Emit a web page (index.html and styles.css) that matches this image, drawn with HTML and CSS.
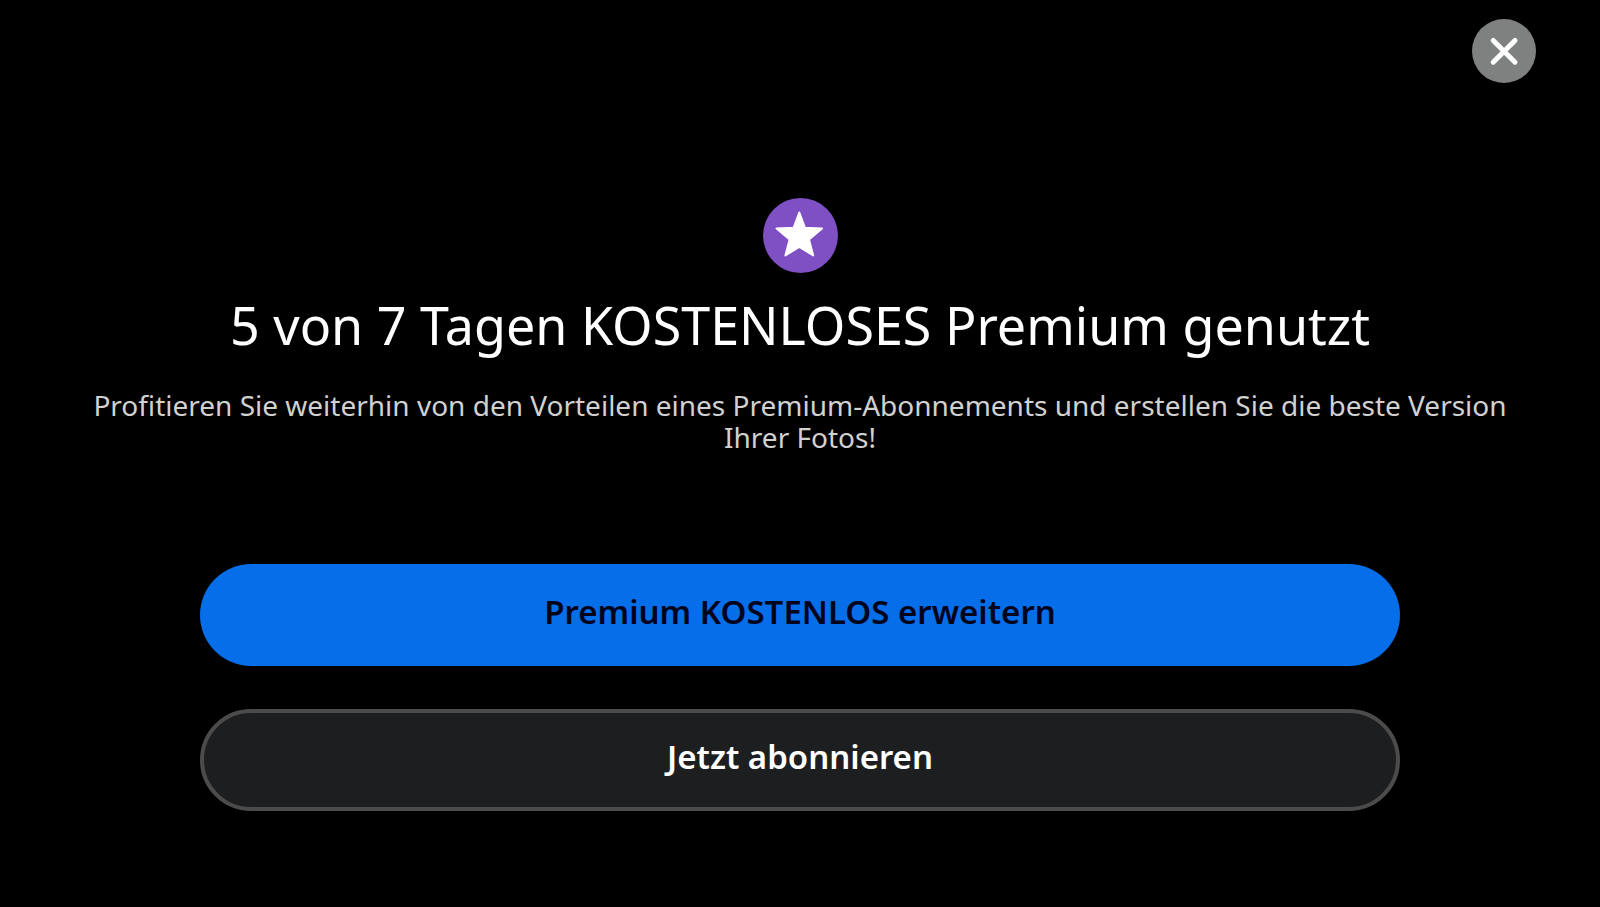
FILE: index.html
```html
<!DOCTYPE html>
<html lang="de">
<head>
<meta charset="utf-8">
<meta name="viewport" content="width=device-width, initial-scale=1">
<title>Premium</title>
<link rel="stylesheet" href="styles.css">
</head>
<body>
<div class="screen">
  <header class="topbar">
    <button class="close" type="button" aria-label="Schließen">
      <svg class="close-icon" viewBox="0 0 64 64" aria-hidden="true"><path d="M21.2 21.4 43 43.2M43 21.4 21.2 43.2"/></svg>
    </button>
  </header>
  <main class="offer">
    <svg class="badge" viewBox="0 0 75 75" aria-hidden="true">
      <circle cx="37.5" cy="37.5" r="37.5"/>
      <path d="M36.3 14.5 42 29.8 59 30.4 46 41.4 50.2 57.4 36.3 48.8 22.4 57.4 26.6 41.4 13.6 30.4 30.6 29.8Z"/>
    </svg>
    <h1 class="title">5 von 7 Tagen KOSTENLOSES Premium genutzt</h1>
    <p class="text">Profitieren Sie weiterhin von den Vorteilen eines Premium-Abonnements und erstellen Sie die beste Version Ihrer Fotos!</p>
    <div class="actions">
      <button class="action action-primary" type="button">Premium KOSTENLOS erweitern</button>
      <button class="action action-secondary" type="button">Jetzt abonnieren</button>
    </div>
  </main>
</div>
</body>
</html>
```
FILE: styles.css
```css
* {
  box-sizing: border-box;
}

body {
  margin: 0;
  background: #000;
  color: #fff;
  font-family: "Noto Sans", "Open Sans", sans-serif;
}

.screen {
  display: flex;
  flex-direction: column;
  min-height: 100vh;
}

.topbar {
  display: flex;
  justify-content: flex-end;
  padding: 19px 64px 0;
}

.close {
  width: 64px;
  height: 64px;
  padding: 0;
  border: 0;
  border-radius: 50%;
  background: #7f8180;
  cursor: pointer;
}

.close-icon {
  display: block;
  width: 100%;
  fill: none;
  stroke: #fff;
  stroke-width: 5;
  stroke-linecap: round;
}

.offer {
  display: flex;
  flex-direction: column;
  align-items: center;
  padding: 115px 64px 64px;
  text-align: center;
}

.badge {
  width: 75px;
  height: 75px;
  fill: #7f4fc4;
}

.badge path {
  fill: #fff;
  stroke: #fff;
  stroke-width: 2;
  stroke-linejoin: round;
}

.title {
  margin: 16px 0 0;
  font-size: 52px;
  font-weight: 400;
  line-height: 72px;
}

.text {
  margin: 28px 0 0;
  color: #d1d1d1;
  font-size: 28px;
  line-height: 32px;
}

.actions {
  display: flex;
  flex-direction: column;
  gap: 43px;
  width: 1200px;
  max-width: 100%;
  margin-top: 111px;
}

.action {
  height: 102px;
  padding: 0 32px 8px;
  border: 0;
  border-radius: 51px;
  font-family: inherit;
  font-size: 33px;
  font-weight: 600;
  cursor: pointer;
}

.action-primary {
  background: #066ee9;
  color: #02041c;
}

.action-secondary {
  border: 4px solid #4b4b4b;
  background: #1d1e20;
  color: #fff;
}
```
